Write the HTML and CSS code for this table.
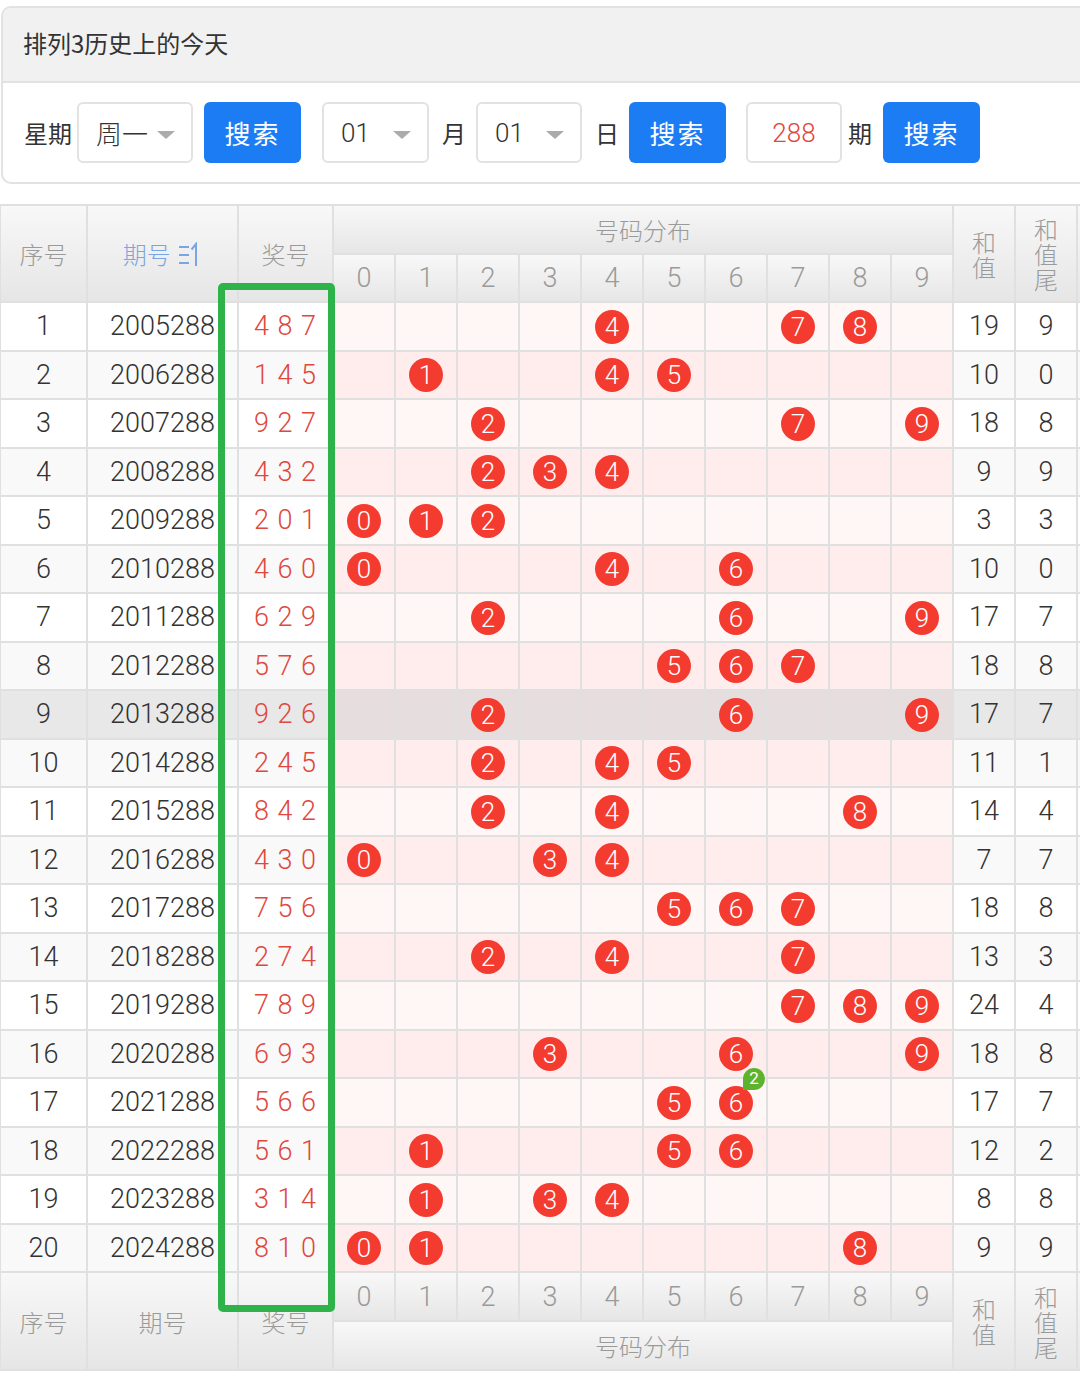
FILE: index.html
```html
<!DOCTYPE html>
<html lang="zh">
<head>
<meta charset="utf-8">
<title>排列3历史上的今天</title>
<link rel="stylesheet" href="styles.css">
</head>
<body>
<div class="page">
<div class="card">
  <div class="card-hd">排列3历史上的今天</div>
  <div class="card-bd">
    <span class="lbl l1">星期</span>
    <span class="sel s1">周一<i class="caret"></i></span>
    <span class="btn b1">搜索</span>
    <span class="sel s2">01<i class="caret"></i></span>
    <span class="lbl l2">月</span>
    <span class="sel s3">01<i class="caret"></i></span>
    <span class="lbl l3">日</span>
    <span class="btn b2">搜索</span>
    <span class="inp">288</span>
    <span class="lbl l4">期</span>
    <span class="btn b3">搜索</span>
  </div>
</div>

<div class="wrap">
<table class="tb">
  <colgroup>
    <col class="c-xh"><col class="c-qh"><col class="c-jh">
    <col class="c-n"><col class="c-n"><col class="c-n"><col class="c-n"><col class="c-n">
    <col class="c-n"><col class="c-n"><col class="c-n"><col class="c-n"><col class="c-n">
    <col class="c-n"><col class="c-n"><col class="c-x">
  </colgroup>
  <thead>
    <tr class="h1">
      <th rowspan="2">序号</th>
      <th rowspan="2" class="sort">期号 <svg class="sico" width="24" height="26" viewBox="0 0 24 26"><path d="M1 5h10M1 13h10M1 21h10" stroke="#79a6e2" stroke-width="2" fill="none"/><path d="M18 24V2L13.5 7.5" stroke="#79a6e2" stroke-width="2" fill="none"/></svg></th>
      <th rowspan="2">奖号</th>
      <th colspan="10" class="fb">号码分布</th>
      <th rowspan="2" class="vt">和值</th>
      <th rowspan="2" class="vt">和值尾</th>
      <th rowspan="2"></th>
    </tr>
    <tr class="h2">
      <th>0</th><th>1</th><th>2</th><th>3</th><th>4</th><th>5</th><th>6</th><th>7</th><th>8</th><th>9</th>
    </tr>
  </thead>
  <tbody>
    <tr><td>1</td><td>2005288</td><td class="jh">4 8 7</td><td class="n"></td><td class="n"></td><td class="n"></td><td class="n"></td><td class="n"><b>4</b></td><td class="n"></td><td class="n"></td><td class="n"><b>7</b></td><td class="n"><b>8</b></td><td class="n"></td><td>19</td><td>9</td><td></td></tr>
    <tr><td>2</td><td>2006288</td><td class="jh">1 4 5</td><td class="n"></td><td class="n"><b>1</b></td><td class="n"></td><td class="n"></td><td class="n"><b>4</b></td><td class="n"><b>5</b></td><td class="n"></td><td class="n"></td><td class="n"></td><td class="n"></td><td>10</td><td>0</td><td></td></tr>
    <tr><td>3</td><td>2007288</td><td class="jh">9 2 7</td><td class="n"></td><td class="n"></td><td class="n"><b>2</b></td><td class="n"></td><td class="n"></td><td class="n"></td><td class="n"></td><td class="n"><b>7</b></td><td class="n"></td><td class="n"><b>9</b></td><td>18</td><td>8</td><td></td></tr>
    <tr><td>4</td><td>2008288</td><td class="jh">4 3 2</td><td class="n"></td><td class="n"></td><td class="n"><b>2</b></td><td class="n"><b>3</b></td><td class="n"><b>4</b></td><td class="n"></td><td class="n"></td><td class="n"></td><td class="n"></td><td class="n"></td><td>9</td><td>9</td><td></td></tr>
    <tr><td>5</td><td>2009288</td><td class="jh">2 0 1</td><td class="n"><b>0</b></td><td class="n"><b>1</b></td><td class="n"><b>2</b></td><td class="n"></td><td class="n"></td><td class="n"></td><td class="n"></td><td class="n"></td><td class="n"></td><td class="n"></td><td>3</td><td>3</td><td></td></tr>
    <tr><td>6</td><td>2010288</td><td class="jh">4 6 0</td><td class="n"><b>0</b></td><td class="n"></td><td class="n"></td><td class="n"></td><td class="n"><b>4</b></td><td class="n"></td><td class="n"><b>6</b></td><td class="n"></td><td class="n"></td><td class="n"></td><td>10</td><td>0</td><td></td></tr>
    <tr><td>7</td><td>2011288</td><td class="jh">6 2 9</td><td class="n"></td><td class="n"></td><td class="n"><b>2</b></td><td class="n"></td><td class="n"></td><td class="n"></td><td class="n"><b>6</b></td><td class="n"></td><td class="n"></td><td class="n"><b>9</b></td><td>17</td><td>7</td><td></td></tr>
    <tr><td>8</td><td>2012288</td><td class="jh">5 7 6</td><td class="n"></td><td class="n"></td><td class="n"></td><td class="n"></td><td class="n"></td><td class="n"><b>5</b></td><td class="n"><b>6</b></td><td class="n"><b>7</b></td><td class="n"></td><td class="n"></td><td>18</td><td>8</td><td></td></tr>
    <tr class="hover"><td>9</td><td>2013288</td><td class="jh">9 2 6</td><td class="n"></td><td class="n"></td><td class="n"><b>2</b></td><td class="n"></td><td class="n"></td><td class="n"></td><td class="n"><b>6</b></td><td class="n"></td><td class="n"></td><td class="n"><b>9</b></td><td>17</td><td>7</td><td></td></tr>
    <tr><td>10</td><td>2014288</td><td class="jh">2 4 5</td><td class="n"></td><td class="n"></td><td class="n"><b>2</b></td><td class="n"></td><td class="n"><b>4</b></td><td class="n"><b>5</b></td><td class="n"></td><td class="n"></td><td class="n"></td><td class="n"></td><td>11</td><td>1</td><td></td></tr>
    <tr><td>11</td><td>2015288</td><td class="jh">8 4 2</td><td class="n"></td><td class="n"></td><td class="n"><b>2</b></td><td class="n"></td><td class="n"><b>4</b></td><td class="n"></td><td class="n"></td><td class="n"></td><td class="n"><b>8</b></td><td class="n"></td><td>14</td><td>4</td><td></td></tr>
    <tr><td>12</td><td>2016288</td><td class="jh">4 3 0</td><td class="n"><b>0</b></td><td class="n"></td><td class="n"></td><td class="n"><b>3</b></td><td class="n"><b>4</b></td><td class="n"></td><td class="n"></td><td class="n"></td><td class="n"></td><td class="n"></td><td>7</td><td>7</td><td></td></tr>
    <tr><td>13</td><td>2017288</td><td class="jh">7 5 6</td><td class="n"></td><td class="n"></td><td class="n"></td><td class="n"></td><td class="n"></td><td class="n"><b>5</b></td><td class="n"><b>6</b></td><td class="n"><b>7</b></td><td class="n"></td><td class="n"></td><td>18</td><td>8</td><td></td></tr>
    <tr><td>14</td><td>2018288</td><td class="jh">2 7 4</td><td class="n"></td><td class="n"></td><td class="n"><b>2</b></td><td class="n"></td><td class="n"><b>4</b></td><td class="n"></td><td class="n"></td><td class="n"><b>7</b></td><td class="n"></td><td class="n"></td><td>13</td><td>3</td><td></td></tr>
    <tr><td>15</td><td>2019288</td><td class="jh">7 8 9</td><td class="n"></td><td class="n"></td><td class="n"></td><td class="n"></td><td class="n"></td><td class="n"></td><td class="n"></td><td class="n"><b>7</b></td><td class="n"><b>8</b></td><td class="n"><b>9</b></td><td>24</td><td>4</td><td></td></tr>
    <tr><td>16</td><td>2020288</td><td class="jh">6 9 3</td><td class="n"></td><td class="n"></td><td class="n"></td><td class="n"><b>3</b></td><td class="n"></td><td class="n"></td><td class="n"><b>6</b></td><td class="n"></td><td class="n"></td><td class="n"><b>9</b></td><td>18</td><td>8</td><td></td></tr>
    <tr><td>17</td><td>2021288</td><td class="jh">5 6 6</td><td class="n"></td><td class="n"></td><td class="n"></td><td class="n"></td><td class="n"></td><td class="n"><b>5</b></td><td class="n"><b>6<i class="badge">2</i></b></td><td class="n"></td><td class="n"></td><td class="n"></td><td>17</td><td>7</td><td></td></tr>
    <tr><td>18</td><td>2022288</td><td class="jh">5 6 1</td><td class="n"></td><td class="n"><b>1</b></td><td class="n"></td><td class="n"></td><td class="n"></td><td class="n"><b>5</b></td><td class="n"><b>6</b></td><td class="n"></td><td class="n"></td><td class="n"></td><td>12</td><td>2</td><td></td></tr>
    <tr><td>19</td><td>2023288</td><td class="jh">3 1 4</td><td class="n"></td><td class="n"><b>1</b></td><td class="n"></td><td class="n"><b>3</b></td><td class="n"><b>4</b></td><td class="n"></td><td class="n"></td><td class="n"></td><td class="n"></td><td class="n"></td><td>8</td><td>8</td><td></td></tr>
    <tr><td>20</td><td>2024288</td><td class="jh">8 1 0</td><td class="n"><b>0</b></td><td class="n"><b>1</b></td><td class="n"></td><td class="n"></td><td class="n"></td><td class="n"></td><td class="n"></td><td class="n"></td><td class="n"><b>8</b></td><td class="n"></td><td>9</td><td>9</td><td></td></tr>
  </tbody>
  <tfoot>
    <tr class="f1">
      <th rowspan="2">序号</th>
      <th rowspan="2">期号</th>
      <th rowspan="2">奖号</th>
      <th>0</th><th>1</th><th>2</th><th>3</th><th>4</th><th>5</th><th>6</th><th>7</th><th>8</th><th>9</th>
      <th rowspan="2" class="vt">和值</th>
      <th rowspan="2" class="vt">和值尾</th>
      <th rowspan="2"></th>
    </tr>
    <tr class="f2">
      <th colspan="10" class="fb">号码分布</th>
    </tr>
  </tfoot>
</table>
<div class="mark"></div>
</div>
</div>
</body>
</html>
```

FILE: styles.css
```css
html, body {
  margin: 0;
  padding: 0;
  background: #fff;
}
body {
  font-family: "Noto Sans", "Noto Sans CJK SC", sans-serif;
  color: #333;
}
.page {
  width: 1080px;
  overflow: hidden;
}

/* ---------- card ---------- */
.card {
  margin: 6px 0 0 1px;
  width: 1140px;
  border: 2px solid #e2e2e2;
  border-radius: 10px;
}
.card-hd {
  box-sizing: border-box;
  height: 75px;
  padding-left: 20px;
  padding-bottom: 4px;
  background: #f1f1f1;
  border-bottom: 2px solid #e2e2e2;
  border-radius: 8px 8px 0 0;
  display: flex;
  align-items: center;
  font-family: "Noto Sans CJK SC", sans-serif;
  font-size: 24px;
  color: #333;
}
.card-bd {
  height: 99px;
  display: flex;
  align-items: center;
  padding-left: 20px;
  font-family: "Noto Sans CJK SC", sans-serif;
}
.lbl {
  font-size: 24px;
  color: #333;
}
.sel, .inp, .btn {
  box-sizing: border-box;
  height: 61px;
  border-radius: 6px;
  display: inline-flex;
  align-items: center;
  font-size: 26px;
  font-weight: 300;
}
.sel, .inp {
  border: 2px solid #e2e2e2;
  background: #fff;
  color: #333;
}
.sel {
  padding-left: 17px;
  position: relative;
}
.caret {
  position: absolute;
  right: 16px;
  top: 27px;
  width: 0;
  height: 0;
  border-left: 9px solid transparent;
  border-right: 9px solid transparent;
  border-top: 8px solid #ababab;
}
.btn {
  background: #1c7cf4;
  color: #fff;
  justify-content: center;
  width: 97px;
  letter-spacing: 2px;
  font-weight: 400;
}
.inp {
  width: 96px;
  justify-content: center;
  color: #e2453b;
  font-family: "Roboto", "Noto Sans", sans-serif;
}
.l1 { margin-left: 1px; }
.s1 { margin-left: 5px; width: 116px; }
.b1 { margin-left: 11px; }
.s2 { margin-left: 21px; width: 107px; font-family: "Roboto", "Noto Sans", sans-serif; }
.l2 { margin-left: 13px; }
.s3 { margin-left: 10px; width: 106px; font-family: "Roboto", "Noto Sans", sans-serif; }
.l3 { margin-left: 13px; }
.b2 { margin-left: 10px; }
.inp { margin-left: 20px; }
.l4 { margin-left: 6px; }
.b3 { margin-left: 11px; }

/* ---------- table ---------- */
.wrap {
  position: relative;
  margin-top: 20px;
  width: 1080px;
  overflow: hidden;
}
.tb {
  border-collapse: collapse;
  table-layout: fixed;
  width: 1136px;
  margin-left: -1px;
  font-family: "Roboto", "Noto Sans", sans-serif;
  font-size: 27px;
  font-weight: 300;
}
.c-xh { width: 87px; }
.c-qh { width: 151px; }
.c-jh { width: 95px; }
.c-n { width: 62px; }
.c-x { width: 60px; }

.tb th, .tb td {
  border: 2px solid #e0e0e0;
  padding: 0;
  text-align: center;
  white-space: nowrap;
  overflow: visible;
}
.tb th {
  background: linear-gradient(#f8f8f8, #e6e6e6);
  color: #9a9a9a;
  font-weight: 300;
  font-size: 24px;
  font-family: "Noto Sans CJK SC", sans-serif;
}
.tb thead .h2 th, .tb tfoot .f1 th {
  font-family: "Roboto", "Noto Sans", sans-serif;
  font-size: 27px;
}
.tb thead .h1 th[rowspan], .tb tfoot .f1 th[rowspan] {
  font-family: "Noto Sans CJK SC", sans-serif;
  font-size: 24px;
}
.h1 { height: 49px; }
.h2 { height: 48px; }
.f1 { height: 49px; }
.f2 { height: 49px; }
.tb th.vt {
  white-space: normal;
  line-height: 25px;
  padding: 0 18px;
  word-break: break-all;
}
.tb th.sort {
  color: #79a6e2;
}
.sico {
  vertical-align: -4px;
  margin-left: 2px;
}

.tb tbody tr { height: 48.5px; }
.tb tbody td {
  background: #fff;
  color: #333;
}
.tb tbody tr:nth-child(even) td { background: #f9f9f9; }
.tb tbody td.n { background: #fff6f6; }
.tb tbody tr:nth-child(even) td.n { background: #ffecec; }
.tb tbody tr.hover td { background: #e8e8e8; }
.tb tbody tr.hover td.n { background: #e6dede; }
.tb td.jh {
  color: #e0473d;
  letter-spacing: 1px;
}

.tb td b {
  position: relative;
  display: inline-flex;
  align-items: center;
  justify-content: center;
  width: 34px;
  height: 34px;
  border-radius: 50%;
  background: #f43b30;
  color: #fff;
  font-weight: 300;
  font-size: 26px;
  line-height: 1;
  vertical-align: middle;
}
.badge {
  position: absolute;
  left: 24px;
  top: -18px;
  width: 22px;
  height: 22px;
  border-radius: 50% 50% 50% 0;
  background: #5db22e;
  color: #fff;
  font-style: normal;
  font-size: 17px;
  font-weight: 400;
  display: flex;
  align-items: center;
  justify-content: center;
  line-height: 1;
}

.mark {
  position: absolute;
  left: 218px;
  top: 79px;
  width: 117px;
  height: 1029px;
  box-sizing: border-box;
  border: 7px solid #2eb34b;
  border-radius: 5px;
  pointer-events: none;
}
```
